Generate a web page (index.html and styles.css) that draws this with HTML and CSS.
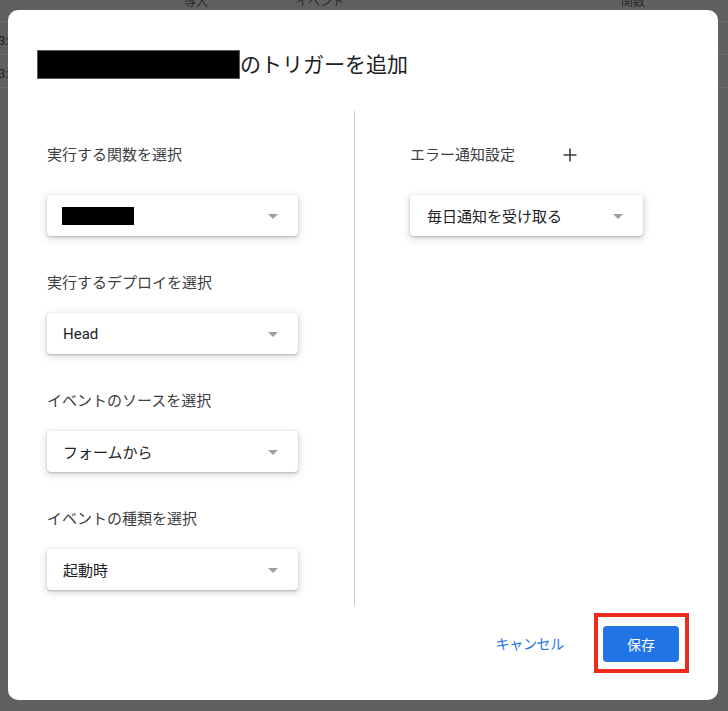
FILE: index.html
```html
<!DOCTYPE html>
<html lang="ja">
<head>
<meta charset="utf-8">
<title>トリガーを追加</title>
<link rel="stylesheet" href="styles.css">
</head>
<body>
<div class="sheet">
  <div class="sheet-head">
    <span class="col-a">導入</span>
    <span class="col-b">イベント</span>
    <span class="col-c">関数</span>
  </div>
  <div class="sheet-row"><span>3:</span></div>
  <div class="sheet-row"><span>3:</span></div>
</div>

<div class="dialog">
  <div class="title">
    <span class="redact-title"></span>
    <span class="title-text">のトリガーを追加</span>
  </div>

  <div class="columns">
    <div class="col-left">
      <div class="field field-first">
        <div class="label">実行する関数を選択</div>
        <div class="select">
          <span class="redact-value"></span>
          <span class="arrow"></span>
        </div>
      </div>
      <div class="field">
        <div class="label">実行するデプロイを選択</div>
        <div class="select">
          <span class="value">Head</span>
          <span class="arrow"></span>
        </div>
      </div>
      <div class="field">
        <div class="label">イベントのソースを選択</div>
        <div class="select">
          <span class="value">フォームから</span>
          <span class="arrow"></span>
        </div>
      </div>
      <div class="field">
        <div class="label">イベントの種類を選択</div>
        <div class="select">
          <span class="value">起動時</span>
          <span class="arrow"></span>
        </div>
      </div>
    </div>

    <div class="col-right">
      <div class="field field-first">
        <div class="label label-row">
          <span>エラー通知設定</span>
          <svg class="plus" width="14" height="14" viewBox="0 0 14 14" aria-hidden="true">
            <path d="M7 0.5V13.5M0.5 7H13.5" stroke="#3c4043" stroke-width="1.6" fill="none"/>
          </svg>
        </div>
        <div class="select select-wide">
          <span class="value">毎日通知を受け取る</span>
          <span class="arrow"></span>
        </div>
      </div>
    </div>
  </div>

  <div class="footer">
    <button class="btn-cancel" type="button">キャンセル</button>
    <div class="save-wrap">
      <button class="btn-save" type="button">保存</button>
    </div>
  </div>
</div>
</body>
</html>
```

FILE: styles.css
```css
* {
  box-sizing: border-box;
}

html, body {
  margin: 0;
  padding: 0;
}

body {
  width: 728px;
  height: 711px;
  overflow: hidden;
  background: #606060;
  font-family: Roboto, "Noto Sans CJK JP", sans-serif;
  position: relative;
}

/* background sheet (dimmed) */
.sheet {
  color: #2a2a2a;
  font-size: 12px;
}

.sheet-head {
  height: 26px;
  border-bottom: 1px solid #6e6e6e;
  display: flex;
  align-items: flex-start;
  line-height: 12px;
  margin-top: -4px;
}

.sheet-head .col-a {
  margin-left: 184px;
}

.sheet-head .col-b {
  margin-left: 88px;
}

.sheet-head .col-c {
  margin-left: 277px;
}

.sheet-row {
  height: 33px;
  border-bottom: 1px solid #6e6e6e;
  display: flex;
  align-items: center;
  font-size: 13px;
  padding-top: 4px;
}

.sheet-row span {
  margin-left: -2px;
  color: #222;
}

/* dialog */
.dialog {
  position: absolute;
  left: 8px;
  top: 10px;
  width: 710px;
  height: 690px;
  background: #ffffff;
  border-radius: 10px;
  display: flex;
  flex-direction: column;
}

.title {
  display: flex;
  align-items: center;
  height: 29px;
  margin: 40px 0 0 29px;
}

.redact-title {
  display: block;
  width: 203px;
  height: 29px;
  background: #000;
  border: 1px solid #5a5a5a;
}

.title-text {
  font-size: 21px;
  color: #202124;
  line-height: 29px;
  padding-top: 1px;
}

.columns {
  display: flex;
  margin-top: 32px;
  height: 494px;
}

.col-left {
  width: 347px;
  border-right: 1px solid #c6c6c6;
  padding: 34px 0 0 39px;
}

.col-right {
  flex: 1;
  padding: 34px 0 0 55px;
}

.field + .field {
  margin-top: 37px;
}

.label {
  height: 20px;
  line-height: 20px;
  font-size: 15px;
  color: #3c4043;
  margin-bottom: 20px;
}

.field-first .label {
  margin-bottom: 30px;
}

.label-row {
  display: flex;
  align-items: center;
  gap: 48px;
}

.plus {
  display: block;
}

.select {
  width: 251px;
  height: 41px;
  border-radius: 4px;
  background: #fff;
  box-shadow: 0 1px 2px 0 rgba(60, 64, 67, 0.3), 0 2px 6px 2px rgba(60, 64, 67, 0.15);
  display: flex;
  align-items: center;
  justify-content: space-between;
  padding: 0 20px 0 16px;
}

.select-wide {
  width: 233px;
  padding-left: 17px;
}

.value {
  font-size: 15px;
  color: #202124;
}

.redact-value {
  display: block;
  width: 72px;
  height: 18px;
  background: #000;
  margin-left: -1px;
}

.arrow {
  width: 0;
  height: 0;
  border-left: 5px solid transparent;
  border-right: 5px solid transparent;
  border-top: 5px solid #9aa0a6;
  margin-top: 2px;
}

/* footer */
.footer {
  display: flex;
  justify-content: flex-end;
  align-items: center;
  gap: 39px;
  margin-top: 21px;
  padding-right: 39px;
}

.btn-cancel {
  border: 0;
  background: none;
  padding: 0;
  font-family: Roboto, "Noto Sans CJK JP", sans-serif;
  font-size: 14px;
  color: #1a73e8;
  line-height: 20px;
  letter-spacing: -0.3px;
}

.save-wrap {
  position: relative;
}

.save-wrap::after {
  content: "";
  position: absolute;
  top: -13px;
  left: -9px;
  right: -10px;
  bottom: -11px;
  border: 4px solid #ee2a1e;
  pointer-events: none;
}

.btn-save {
  display: block;
  width: 76px;
  height: 36px;
  border: 0;
  border-radius: 4px;
  background: #2174e6;
  color: #fff;
  font-family: Roboto, "Noto Sans CJK JP", sans-serif;
  font-size: 14px;
  padding: 0;
}
```
